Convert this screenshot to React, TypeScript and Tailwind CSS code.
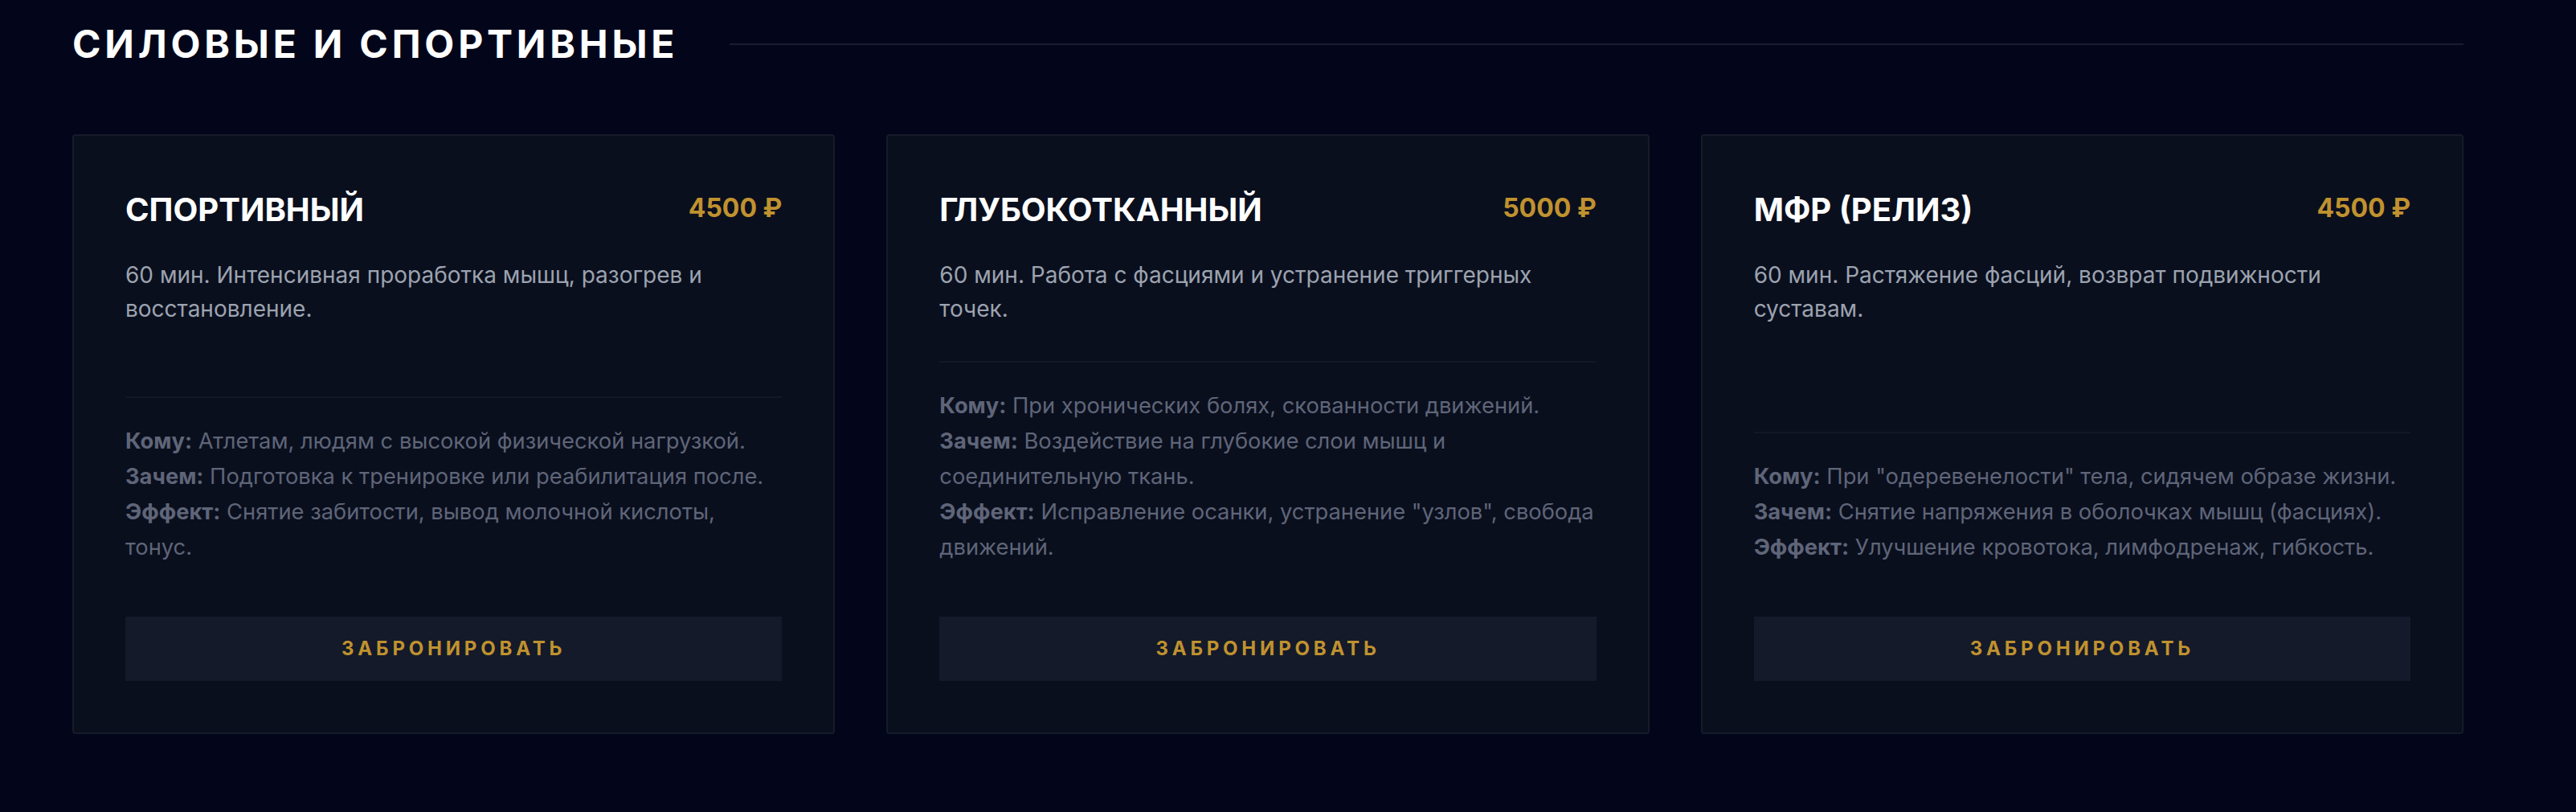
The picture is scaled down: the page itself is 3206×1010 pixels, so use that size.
import React from 'react'

type Service = {
  name: string
  price: string
  desc: string
  who: string
  why: string
  effect: string
}

const services: Service[] = [
  {
    name: 'СПОРТИВНЫЙ',
    price: '4500 ₽',
    desc: '60 мин. Интенсивная проработка мышц, разогрев и восстановление.',
    who: 'Атлетам, людям с высокой физической нагрузкой.',
    why: 'Подготовка к тренировке или реабилитация после.',
    effect: 'Снятие забитости, вывод молочной кислоты, тонус.',
  },
  {
    name: 'ГЛУБОКОТКАННЫЙ',
    price: '5000 ₽',
    desc: '60 мин. Работа с фасциями и устранение триггерных точек.',
    who: 'При хронических болях, скованности движений.',
    why: 'Воздействие на глубокие слои мышц и соединительную ткань.',
    effect: 'Исправление осанки, устранение "узлов", свобода движений.',
  },
  {
    name: 'МФР (РЕЛИЗ)',
    price: '4500 ₽',
    desc: '60 мин. Растяжение фасций, возврат подвижности суставам.',
    who: 'При "одеревенелости" тела, сидячем образе жизни.',
    why: 'Снятие напряжения в оболочках мышц (фасциях).',
    effect: 'Улучшение кровотока, лимфодренаж, гибкость.',
  },
]

function ServiceCard({ s }: { s: Service }) {
  return (
    <div className="flex flex-col rounded-[4px] border-2 border-[#161b2a] bg-[#0a0f1e] p-16">
      <div className="flex items-start justify-between">
        <h3 className="text-[40px] font-bold leading-[56px] text-white">{s.name}</h3>
        <span className="pt-[6px] text-[32px] font-bold leading-[40px] text-[#c0922f]">{s.price}</span>
      </div>
      <p className="mt-8 mb-[44px] text-[28px] leading-[42px] text-[#9ca3af]">{s.desc}</p>

      <div className="mt-auto border-t-2 border-[#131827] pt-8 text-[27.3px] leading-[44px] text-[#5f6578]">
        <p>
          <span className="font-bold">Кому:</span> {s.who}
        </p>
        <p>
          <span className="font-bold">Зачем:</span> {s.why}
        </p>
        <p>
          <span className="font-bold">Эффект:</span> {s.effect}
        </p>
      </div>

      <button className="mt-16 h-20 w-full bg-[#141a29] text-[24px] font-bold tracking-[0.2em] text-[#c0922f]">
        ЗАБРОНИРОВАТЬ
      </button>
    </div>
  )
}

export default function App() {
  return (
    <div className="min-h-screen bg-[#03061a] pt-[23px] pl-[90px] pb-24 font-['Inter',sans-serif]">
      <div className="w-[2976px]">
        <div className="mb-20 flex items-center gap-16">
          <h2 className="text-[48px] font-bold leading-[64px] tracking-[0.1em] text-white">
            СИЛОВЫЕ И СПОРТИВНЫЕ
          </h2>
          <div className="h-[2px] flex-1 bg-[#1a1d30]" />
        </div>

        <div className="grid grid-cols-3 gap-16">
          {services.map(s => (
            <ServiceCard key={s.name} s={s} />
          ))}
        </div>
      </div>
    </div>
  )
}
